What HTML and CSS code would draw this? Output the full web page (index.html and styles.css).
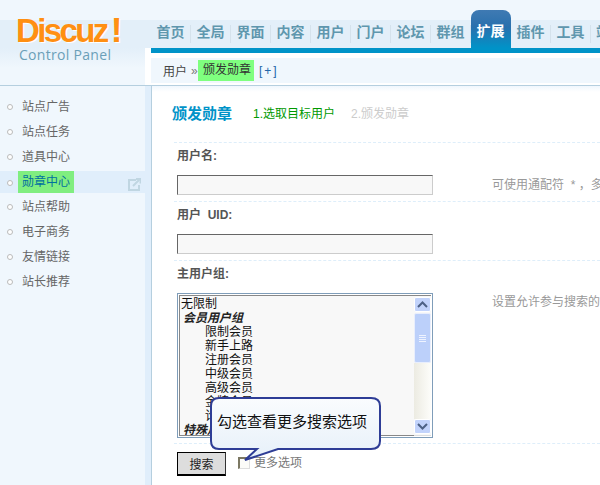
FILE: index.html
```html
<!DOCTYPE html>
<html>
  <head>
  <title>Discuz! Control Panel</title>
  <meta charset="utf-8">
  <link rel="stylesheet" href="styles.css">
  </head>
  <body>

    <div class="header">
      <div class="logo">
        <div class="logo-name">Discuz<span class="logo-bang">!</span></div>
        <div class="logo-sub">Control Panel</div>
      </div>
      <div class="gutter"></div>
      <div class="head-right">
        <ul class="nav">
          <li>首页</li>
          <li>全局</li>
          <li>界面</li>
          <li>内容</li>
          <li>用户</li>
          <li>门户</li>
          <li>论坛</li>
          <li>群组</li>
          <li class="active">扩展</li>
          <li>插件</li>
          <li>工具</li>
          <li class="nav-cut">站</li>
        </ul>
        <div class="nav-bar"></div>
        <div class="crumbs">
          <span>用户</span><span class="crumb-sep">&raquo;</span><span class="mark crumb-mark">颁发勋章</span><span class="crumb-add">[+]</span>
        </div>
      </div>
    </div>

    <div class="body-wrap">
      <ul class="side">
        <li>站点广告</li>
        <li>站点任务</li>
        <li>道具中心</li>
        <li class="current">
          <span class="mark">勋章中心</span>
          <svg class="side-open" width="13" height="13" viewBox="0 0 13 13">
            <path d="M8 2H1v10h10V7" fill="none" stroke="#c0d6e2" stroke-width="2"/>
            <path d="M5 8l6-6M8 1h4.500v4.500" fill="none" stroke="#c0d6e2" stroke-width="2"/>
          </svg>
        </li>
        <li>站点帮助</li>
        <li>电子商务</li>
        <li>友情链接</li>
        <li>站长推荐</li>
      </ul>
      <div class="side-gutter"></div>

      <div class="main">
        <div class="title-row">
          <h3>颁发勋章</h3>
          <span class="step step-on">1.选取目标用户</span>
          <span class="step step-off">2.颁发勋章</span>
        </div>

        <div class="row row-name">
          <div class="label">用户名:</div>
          <div class="field">
            <div class="input"></div>
            <div class="hint">可使用通配符&nbsp;&nbsp;*&nbsp;，多</div>
          </div>
        </div>

        <div class="row row-uid">
          <div class="label">用户&nbsp; UID:</div>
          <div class="field">
            <div class="input"></div>
          </div>
        </div>

        <div class="row row-group">
          <div class="label">主用户组:</div>
          <div class="field field-top">
            <div class="listbox">
              <div class="options">
                <div>无限制</div>
                <div class="optgroup">会员用户组</div>
                <div class="opt">限制会员</div>
                <div class="opt">新手上路</div>
                <div class="opt">注册会员</div>
                <div class="opt">中级会员</div>
                <div class="opt">高级会员</div>
                <div class="opt">金牌会员</div>
                <div class="opt">论坛元老</div>
                <div class="optgroup">特殊用户组</div>
              </div>
              <div class="scroll">
                <div class="scroll-btn">
                  <svg width="11" height="7" viewBox="0 0 11 7"><path d="M1 6l4.500-4.500L10 6" fill="none" stroke="#4d6185" stroke-width="2"/></svg>
                </div>
                <div class="scroll-thumb"><span></span><span></span><span></span><span></span></div>
                <div class="scroll-track"></div>
                <div class="scroll-btn">
                  <svg width="11" height="7" viewBox="0 0 11 7"><path d="M1 1l4.500 4.500L10 1" fill="none" stroke="#4d6185" stroke-width="2"/></svg>
                </div>
              </div>
            </div>
            <div class="hint">设置允许参与搜索的</div>
          </div>
        </div>

        <div class="row row-submit">
          <button class="btn">搜索</button>
          <span class="check"></span>
          <span class="check-label">更多选项</span>
        </div>

        <div class="callout">
          <svg class="callout-shape" width="172" height="68" viewBox="0 0 172 68">
            <defs>
              <linearGradient id="callout-fill" x1="0" y1="0" x2="0" y2="1">
                <stop offset="0" stop-color="#fafcfe"/>
                <stop offset="1" stop-color="#e6f0f9"/>
              </linearGradient>
            </defs>
            <path d="M9 1H161Q170 1 170 9V44Q170 52 161 52H68L35 63 47 52H9Q1 52 1 44V9Q1 1 9 1Z" fill="url(#callout-fill)" stroke="#2e3d96" stroke-width="2"/>
          </svg>
          <span class="callout-text">勾选查看更多搜索选项</span>
        </div>
      </div>
    </div>

  </body>
</html>
```

FILE: styles.css
```css
html,
body
{
  margin: 0;
  padding: 0;
  height: 485px;
  overflow: hidden;
  background: white;
  font-family: "Liberation Sans", "Noto Sans CJK SC", sans-serif;
  font-size: 12px;
  color: #555;
}

ul
{
  list-style-type: none;
  margin: 0;
  padding: 0;
}

/* Top part */
.header
{
  display: flex;
  height: 85px;
  border-bottom: 1px solid #b5cfdf;
  background: linear-gradient(#f0f7fd 20px, #e3eff9 20px, #e3eff9 48px, #f0f7fd 68px);
  overflow: hidden;
}
.logo
{
  width: 145px;
  height: 81px;
  padding-top: 12px;
  padding-left: 16px;
  box-sizing: border-box;
  flex: none;
}
.logo-name
{
  font-size: 33px;
  font-weight: bold;
  line-height: 36px;
  letter-spacing: -2.6px;
  color: #ff8f12;
  text-shadow: 1px 1px 0 white;
}
.logo-bang
{
  font-size: 35px;
  margin-left: 4px;
}
.logo-sub
{
  margin-top: -3px;
  margin-left: 3px;
  font-family: "Open Sans", sans-serif;
  font-size: 14px;
  line-height: 18px;
  letter-spacing: 0.3px;
  color: #6a9fb8;
}
.gutter
{
  width: 6px;
  flex: none;
  margin-top: 48px;
  background: white;
}
.head-right
{
  flex: 1;
  min-width: 0;
  overflow: hidden;
}

.nav
{
  display: flex;
  height: 48px;
  padding-top: 10px;
  box-sizing: border-box;
  align-items: flex-end;
}
.nav li
{
  flex: none;
  width: 40px;
  height: 28px;
  padding-top: 1px;
  padding-right: 1px;
  box-sizing: border-box;
  text-align: center;
  font-size: 14px;
  font-weight: bold;
  line-height: 22px;
  color: #5f97ae;
  background: linear-gradient(#d5e2ec, #d5e2ec) no-repeat right 0 top 5px / 1px 18px;
}
.nav li.nav-cut
{
  padding-left: 5px;
  text-align: left;
  background: none;
}
.nav li.active
{
  height: 38px;
  padding-top: 10px;
  border-radius: 8px 8px 0 0;
  color: white;
  background: linear-gradient(#3f7ab3, #2a70ad 45%, #0093c8);
}
.nav-bar
{
  height: 5px;
  background: #0093c8;
  border-bottom: 5px solid white;
}
.crumbs
{
  display: flex;
  align-items: center;
  height: 25px;
  padding-left: 12px;
  background: #f0f7fd;
  border-bottom: 2px solid white;
  box-sizing: content-box;
  color: #444;
}
.crumb-sep
{
  margin-left: 4px;
  width: 7px;
  color: #777;
}
.mark
{
  background: #7fff7f;
}
.crumb-mark
{
  height: 21px;
  line-height: 21px;
  padding: 0 3px 0 5px;
  color: #333;
}
.crumb-add
{
  margin-left: 5px;
  color: #2366a8;
  letter-spacing: 2px;
}

/* Below the top part */
.body-wrap
{
  display: flex;
  height: 399px;
}
.side
{
  width: 145px;
  flex: none;
  padding-top: 9px;
  box-sizing: border-box;
  background: #f0f7fd;
}
.side li
{
  position: relative;
  height: 25px;
  line-height: 25px;
  padding-left: 22px;
  color: #666;
}
.side li:before
{
  content: "";
  position: absolute;
  left: 7px;
  top: 9px;
  width: 4px;
  height: 4px;
  border: 1px solid #bbb;
  border-radius: 50%;
  background: white;
}
.side li.current
{
  background: #e0eefb;
  color: #00709f;
  height: 22px;
  line-height: 22px;
  margin-top: 1px;
  margin-bottom: 2px;
}
.side li.current .mark
{
  display: inline-block;
  margin-left: -4px;
  padding: 0 4px;
  background: #80ee80;
}
.side-open
{
  position: absolute;
  right: 4px;
  top: 7px;
}
.side-gutter
{
  width: 6px;
  flex: none;
  background: #e0eefb;
  border-right: 1px solid #b5cfdf;
}

.main
{
  position: relative;
  flex: 1;
  min-width: 0;
  padding-left: 22px;
  overflow: hidden;
  background: linear-gradient(#f0f7fd, white 6px);
}
.title-row
{
  display: flex;
  align-items: center;
  height: 56px;
}
.title-row h3
{
  margin: 0 0 4px -2px;
  font-size: 15px;
  font-weight: bold;
  color: #0093c8;
}
.step
{
  margin-bottom: 4px;
}
.step-on
{
  margin-left: 21px;
  color: #090;
}
.step-off
{
  margin-left: 16px;
  color: #ccc;
}

.row
{
  border-top: 1px dashed #deeefa;
  width: 426px;
}
.label
{
  height: 26px;
  padding-left: 3px;
  line-height: 26px;
  font-weight: bold;
  color: #555;
}
.field
{
  display: flex;
  padding-left: 3px;
  padding-top: 6px;
  align-items: flex-start;
}
.row-name,
.row-uid
{
  height: 58px;
}
.row-group
{
  height: 182px;
}
.input
{
  width: 256px;
  height: 20px;
  box-sizing: border-box;
  flex: none;
  background: #f8f8f8;
  border: 1px solid #ccc;
  border-top-color: #666;
  border-left-color: #666;
}
.hint
{
  margin-left: 59px;
  color: #999;
  white-space: nowrap;
  line-height: 20px;
}
.field-top .hint
{
  margin-top: -1px;
}

.listbox
{
  display: flex;
  flex: none;
  width: 256px;
  height: 145px;
  box-sizing: border-box;
  border: 1px solid #7f9db9;
  padding: 1px;
  background: white;
}
.options
{
  flex: 1;
  min-width: 0;
  height: 141px;
  padding-left: 1px;
  padding-top: 1px;
  box-sizing: border-box;
  overflow: hidden;
  border: 1px solid #888;
  border-right: none;
  background: #f8f8f8;
  color: #111;
  line-height: 14px;
}
.optgroup
{
  font-weight: bold;
  font-style: italic;
  color: #222;
  padding-left: 2px;
}
.opt
{
  padding-left: 24px;
}
.scroll
{
  display: flex;
  flex-direction: column;
  width: 17px;
  flex: none;
  height: 141px;
  padding: 1px 0;
  box-sizing: border-box;
  border-top: 1px solid #888;
  border-bottom: 1px solid #ddd;
  background: #f8f8f8;
}
.scroll-btn
{
  display: flex;
  align-items: center;
  justify-content: center;
  flex: none;
  height: 15px;
  box-sizing: border-box;
  background: #c2d3fb;
  border: 1px solid white;
  border-radius: 2px;
}
.scroll-thumb
{
  display: flex;
  flex-direction: column;
  align-items: center;
  justify-content: center;
  gap: 1px;
  flex: none;
  height: 50px;
  margin-top: 1px;
  box-sizing: border-box;
  background: #bcd0fa;
  border: 1px solid #e8eefd;
  border-radius: 2px;
}
.scroll-thumb span
{
  display: block;
  width: 7px;
  height: 1px;
  background: #eef3ff;
}
.scroll-track
{
  flex: 1;
  background: linear-gradient(to right, #ecebe2, #fdfdfa);
}

.row-submit
{
  display: flex;
  align-items: flex-start;
  height: 40px;
  padding-top: 8px;
  padding-left: 3px;
  box-sizing: border-box;
}
.btn
{
  width: 49px;
  height: 24px;
  padding: 0;
  background: #ddd;
  border: 1px solid #000;
  border-right-color: #333;
  border-bottom-width: 2px;
  font-family: inherit;
  font-size: 12px;
  color: #222;
}
.check
{
  width: 12px;
  height: 12px;
  box-sizing: border-box;
  margin-left: 12px;
  margin-top: 5px;
  background: #fbfbf8;
  border: 1px solid #ddd;
  border-top: 2px solid #7c7863;
  border-left: 2px solid #7c7863;
}
.check-label
{
  margin-left: 4px;
  margin-top: 3px;
  line-height: 16px;
  color: #777;
}

/* Speech bubble lies over the list */
.callout
{
  position: absolute;
  left: 58px;
  top: 311px;
  width: 172px;
  height: 68px;
}
.callout-shape
{
  display: block;
}
.callout-text
{
  position: absolute;
  left: 7px;
  top: 15px;
  font-size: 15px;
  line-height: 20px;
  color: #111;
  white-space: nowrap;
}
```
